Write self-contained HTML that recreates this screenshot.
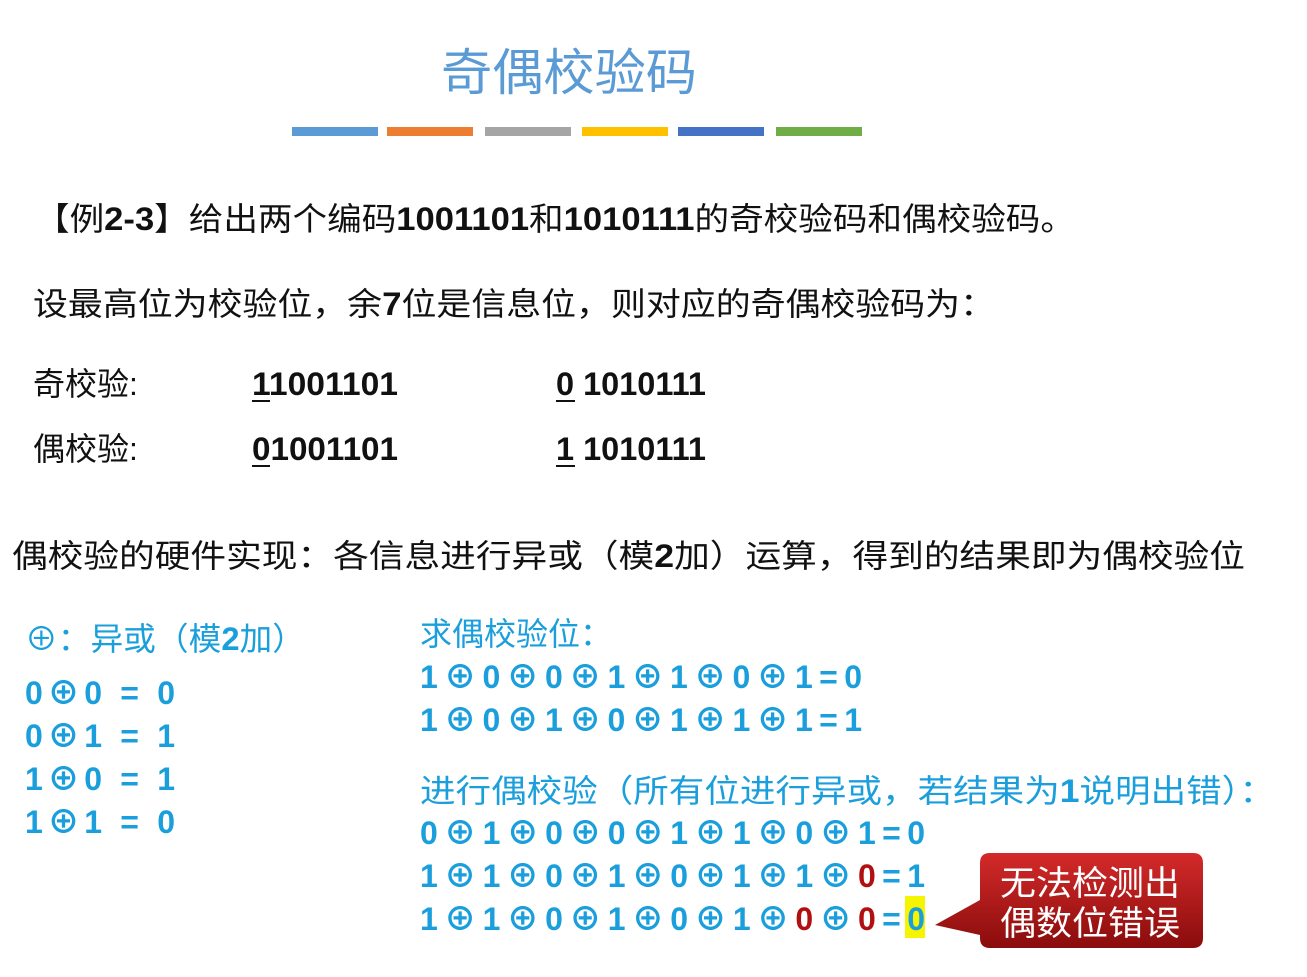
<!DOCTYPE html>
<html><head><meta charset="utf-8"><style>
html,body{margin:0;padding:0;background:#fff;}
svg{display:block}
text{font-family:"Liberation Sans","Noto Sans CJK SC",sans-serif;}
.k{fill:#111;font-size:32px}
.b{fill:#1a9fdc;font-size:32px}
.n{font-weight:bold}
.r{fill:#b01010}
</style></head><body>
<svg width="1307" height="977" viewBox="0 0 1307 977">
<defs>
<linearGradient id="g" x1="0" y1="0" x2="0" y2="1"><stop offset="0" stop-color="#d42a2a"/><stop offset="1" stop-color="#8a0c0c"/></linearGradient>
</defs>
<text x="441" y="90" font-size="50" fill="#5b9bd5" textLength="256" lengthAdjust="spacingAndGlyphs">奇偶校验码</text>
<g>
<rect x="292" y="127" width="86" height="9" fill="#5b9bd5"/>
<rect x="387" y="127" width="86" height="9" fill="#ed7d31"/>
<rect x="485" y="127" width="86" height="9" fill="#a5a5a5"/>
<rect x="582" y="127" width="86" height="9" fill="#ffc000"/>
<rect x="678" y="127" width="86" height="9" fill="#4472c4"/>
<rect x="776" y="127" width="86" height="9" fill="#70ad47"/>
</g>
<text class="k" x="35" y="230" textLength="1040" lengthAdjust="spacingAndGlyphs">【例<tspan class="n">2-3</tspan>】给出两个编码<tspan class="n">1001101</tspan>和<tspan class="n">1010111</tspan>的奇校验码和偶校验码。</text>
<text class="k" x="33" y="315" textLength="962" lengthAdjust="spacingAndGlyphs">设最高位为校验位，余<tspan class="n">7</tspan>位是信息位，则对应的奇偶校验码为：</text>
<text class="k" x="33" y="395">奇校验:</text>
<text class="k n" x="252" y="395" textLength="146" lengthAdjust="spacingAndGlyphs">11001101</text>
<rect x="252" y="400" width="18" height="2" fill="#111"/>
<text class="k n" x="556" y="395" textLength="150" lengthAdjust="spacingAndGlyphs">0 1010111</text>
<rect x="556" y="400" width="19" height="2" fill="#111"/>
<text class="k" x="33" y="460">偶校验:</text>
<text class="k n" x="252" y="460" textLength="146" lengthAdjust="spacingAndGlyphs">01001101</text>
<rect x="252" y="465" width="18" height="2" fill="#111"/>
<text class="k n" x="556" y="460" textLength="150" lengthAdjust="spacingAndGlyphs">1 1010111</text>
<rect x="556" y="465" width="19" height="2" fill="#111"/>
<text class="k" x="12" y="567" font-size="34" textLength="1233" lengthAdjust="spacingAndGlyphs">偶校验的硬件实现：各信息进行异或（模<tspan class="n">2</tspan>加）运算，得到的结果即为偶校验位</text>

<text class="b" x="25" y="650" textLength="280" lengthAdjust="spacingAndGlyphs">⊕：异或（模<tspan class="n">2</tspan>加）</text>
<g class="n">
<text class="b" x="25" y="704" textLength="150" lengthAdjust="spacing">0⊕0 = 0</text>
<text class="b" x="25" y="747" textLength="150" lengthAdjust="spacing">0⊕1 = 1</text>
<text class="b" x="25" y="790" textLength="150" lengthAdjust="spacing">1⊕0 = 1</text>
<text class="b" x="25" y="833" textLength="150" lengthAdjust="spacing">1⊕1 = 0</text>
</g>
<text class="b" x="420" y="645" textLength="192" lengthAdjust="spacingAndGlyphs">求偶校验位：</text>
<g class="n">
<text class="b" x="420" y="688" textLength="442" lengthAdjust="spacing">1⊕0⊕0⊕1⊕1⊕0⊕1=0</text>
<text class="b" x="420" y="731" textLength="442" lengthAdjust="spacing">1⊕0⊕1⊕0⊕1⊕1⊕1=1</text>
</g>
<text class="b" x="420" y="802" textLength="855" lengthAdjust="spacingAndGlyphs">进行偶校验（所有位进行异或，若结果为<tspan class="n">1</tspan>说明出错）：</text>
<rect x="905" y="896" width="20" height="42" fill="#f5f500"/>
<g class="n">
<text class="b" x="420" y="844" textLength="505" lengthAdjust="spacing">0⊕1⊕0⊕0⊕1⊕1⊕0⊕1=0</text>
<text class="b" x="420" y="887" textLength="505" lengthAdjust="spacing">1⊕1⊕0⊕1⊕0⊕1⊕1⊕<tspan class="r">0</tspan>=1</text>
<text class="b" x="420" y="930" textLength="505" lengthAdjust="spacing">1⊕1⊕0⊕1⊕0⊕1⊕<tspan class="r">0</tspan>⊕<tspan class="r">0</tspan>=0</text>
</g>
<path d="M990 853 H1193 Q1203 853 1203 863 V938 Q1203 948 1193 948 H990 Q980 948 980 938 V935 L935 925 L980 900 V863 Q980 853 990 853 Z" fill="url(#g)"/>
<text x="1000" y="895" font-size="34" fill="#fff" textLength="180" lengthAdjust="spacingAndGlyphs">无法检测出</text>
<text x="1000" y="935" font-size="34" fill="#fff" textLength="180" lengthAdjust="spacingAndGlyphs">偶数位错误</text>
</svg>
</body></html>
